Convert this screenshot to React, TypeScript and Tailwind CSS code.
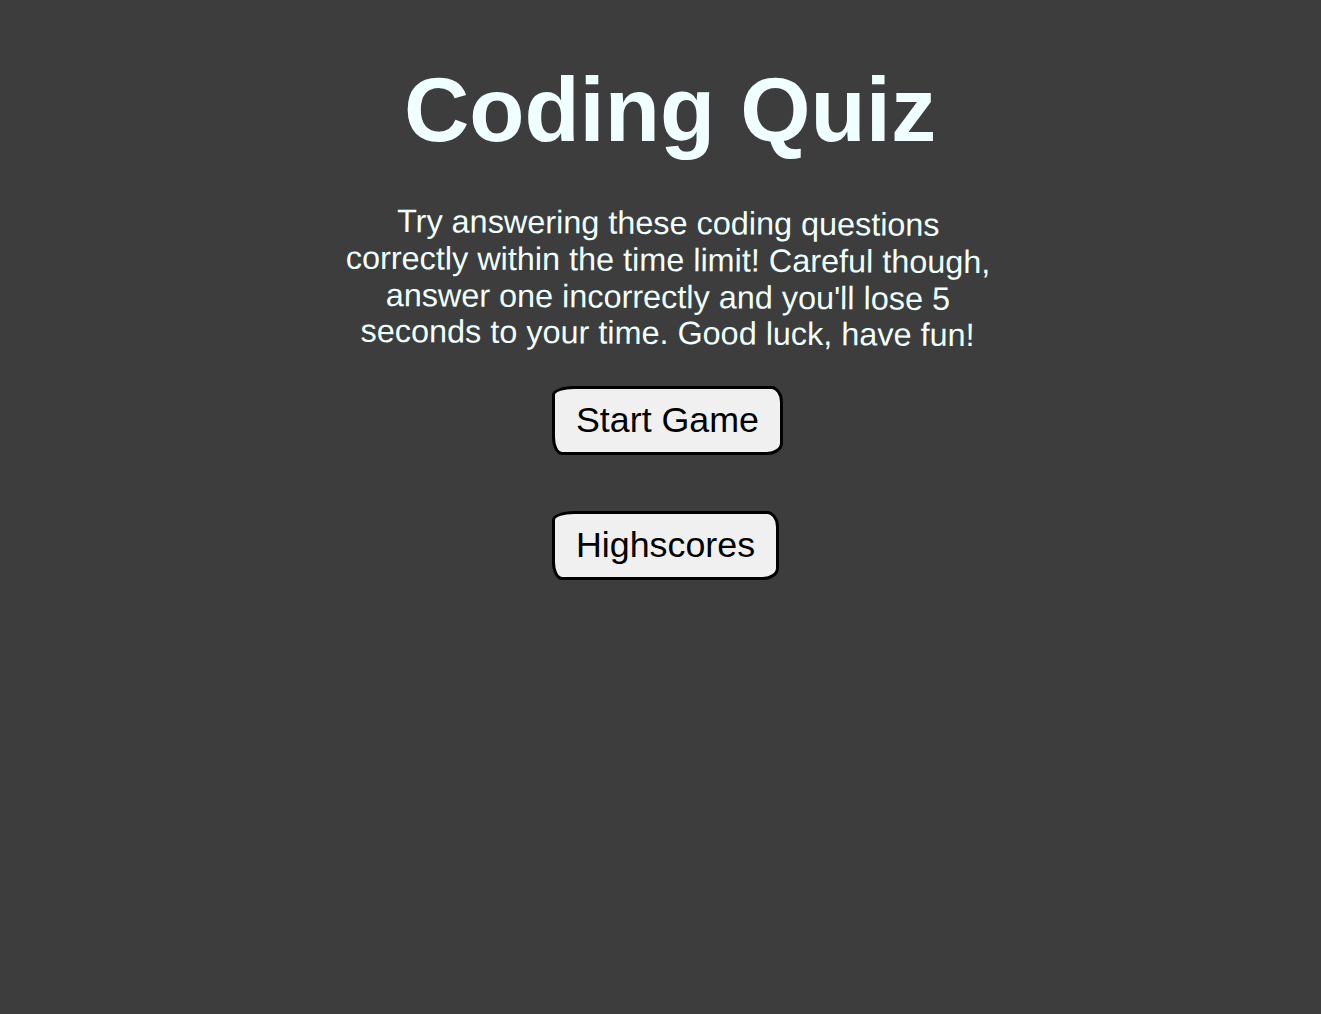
export default function App() {
  const font = { fontFamily: '"Liberation Sans", Arial, sans-serif' };
  return (
    <div className="min-h-[1014px] w-full bg-[#3d3d3d]" style={font}>
      <div className="flex flex-col items-center pl-[14px] pt-[58px]">
        <h1 className="m-0 ml-[5px] text-[90.4px] font-bold leading-[1.149] text-[#f0ffff]">Coding Quiz</h1>
        <p className="mt-[43px] w-[664px] rotate-[0.4deg] text-center text-[32.4px] leading-[36.8px] text-[#f0ffff]">
          Try answering these coding questions correctly within the time limit! Careful though, answer one
          incorrectly and you'll lose 5 seconds to your time. Good luck, have fun!
        </p>
        <div className="mt-[34px] flex flex-col items-start gap-[56px]">
          <button className="rounded-[22px_12px_16px_10px/9px_16px_12px_18px] border-[3px] border-black bg-[#f0f0f0] px-[20.5px] py-[11px] text-[35.8px] leading-[1.149] text-black">
            Start Game
          </button>
          <button className="rounded-[22px_12px_16px_10px/9px_16px_12px_18px] border-[3px] border-black bg-[#f0f0f0] px-[20.5px] py-[11px] text-[35.8px] leading-[1.149] text-black">
            Highscores
          </button>
        </div>
      </div>
    </div>
  );
}
